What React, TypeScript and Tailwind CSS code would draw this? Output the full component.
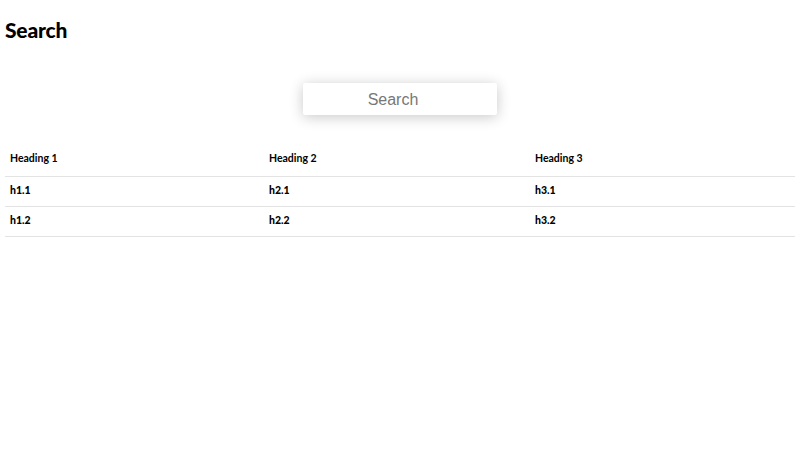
export default function App() {
  const rows = [
    ["h1.1", "h2.1", "h3.1"],
    ["h1.2", "h2.2", "h3.2"],
  ];
  return (
    <div className="min-h-screen bg-white px-[5px] text-black" style={{ fontFamily: "Lato, 'Noto Sans', sans-serif" }}>
      <h1 className="pt-[17px] text-[21px] font-black leading-[26px] tracking-[-0.2px]">Search</h1>

      <div className="mt-[40px] flex justify-center">
        <input
          type="text"
          placeholder="Search"
          className="h-[32px] w-[194px] rounded-[2px] bg-white pr-[14px] pt-[1px] text-center text-[16px] text-gray-700 shadow-[0_2px_14px_rgba(0,0,0,0.22)] outline-none placeholder:text-[#777]"
          style={{ fontFamily: "'Liberation Sans', Arial, sans-serif" }}
        />
      </div>

      <table className="mt-[28px] w-full border-collapse text-[10.5px] font-black">
        <thead>
          <tr className="border-b border-[#e3e3e3]">
            <th className="h-[33px] w-[259px] px-[5px] text-left">Heading 1</th>
            <th className="h-[33px] w-[266px] px-[5px] text-left">Heading 2</th>
            <th className="h-[33px] px-[5px] text-left">Heading 3</th>
          </tr>
        </thead>
        <tbody>
          {rows.map((r) => (
            <tr key={r[0]} className="border-b border-[#e3e3e3]">
              {r.map((c) => (
                <td key={c} className="h-[30px] px-[5px]">
                  {c}
                </td>
              ))}
            </tr>
          ))}
        </tbody>
      </table>
    </div>
  );
}
